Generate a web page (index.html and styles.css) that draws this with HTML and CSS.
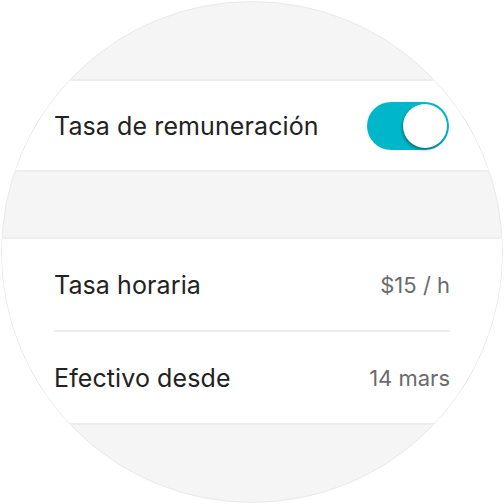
FILE: index.html
```html
<!DOCTYPE html>
<html lang="es">
<head>
<meta charset="utf-8">
<link rel="stylesheet" href="styles.css">
</head>
<body>
<div class="watch">
  <div class="spacer-top"></div>
  <section class="group group-toggle">
    <div class="row">
      <span class="label">Tasa de remuneración</span>
      <span class="toggle"><span class="knob"></span></span>
    </div>
  </section>
  <div class="spacer-mid"></div>
  <section class="group">
    <div class="row">
      <span class="label">Tasa horaria</span>
      <span class="value">$15 / h</span>
    </div>
    <div class="sep"></div>
    <div class="row">
      <span class="label">Efectivo desde</span>
      <span class="value">14 mars</span>
    </div>
  </section>
</div>
</body>
</html>
```
FILE: styles.css
```css
html, body {
  margin: 0;
  padding: 0;
  background: #ffffff;
}
body {
  width: 504px;
  height: 504px;
  font-family: Inter, "Noto Sans", sans-serif;
}
.watch {
  box-sizing: border-box;
  width: 502px;
  height: 502px;
  margin: 1px;
  border: 1px solid #e9e9e9;
  border-radius: 50%;
  overflow: hidden;
  background: #f5f5f5;
  display: flex;
  flex-direction: column;
}
.spacer-top {
  height: 77px;
  flex: none;
}
.spacer-mid {
  height: 65px;
  flex: none;
}
.group {
  flex: none;
  background: #ffffff;
  border-top: 2px solid #ededed;
  border-bottom: 2px solid #ededed;
  padding: 0 52px;
}
.group-toggle .row {
  height: 89px;
}
.row {
  height: 91px;
  display: flex;
  align-items: center;
  justify-content: space-between;
}
.sep {
  height: 2px;
  background: #ededed;
}
.label {
  font-size: 25px;
  color: #222222;
  letter-spacing: 0.1px;
}
.value {
  font-size: 22px;
  color: #6b6b6b;
}
.toggle {
  position: relative;
  width: 82px;
  height: 48px;
  border-radius: 24px;
  background: #00b7c9;
  margin-right: 1px;
}
.knob {
  position: absolute;
  right: 2px;
  top: 2px;
  width: 44px;
  height: 44px;
  border-radius: 50%;
  background: #ffffff;
  box-shadow: -1px 2px 3px rgba(0, 0, 0, 0.35);
}
```
